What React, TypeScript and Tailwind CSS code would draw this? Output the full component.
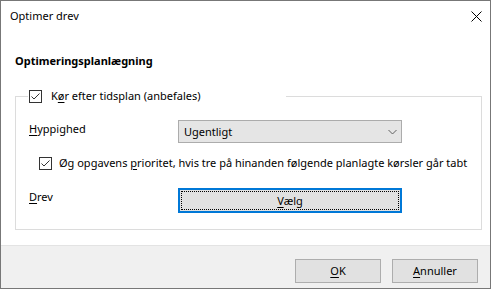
import React from "react";

const font = { fontFamily: '"Noto Sans", "Open Sans", sans-serif' };

function Check() {
  return (
    <div className="w-[13px] h-[13px] border border-[#333333] bg-white flex items-center justify-center shrink-0">
      <svg width="11" height="11" viewBox="0 0 11 11">
        <path d="M1.5 5.5 L4 8 L9.5 2.5" fill="none" stroke="#333333" strokeWidth="1" />
      </svg>
    </div>
  );
}

export default function App() {
  return (
    <div className="w-[492px] h-[289px] bg-white text-[11px] text-black leading-[16px] whitespace-nowrap" style={font}>
      <div className="w-[491px] h-[289px] border border-[#777777] bg-white flex flex-col">
        {/* Title bar */}
        <div className="h-[30px] flex items-center justify-between pl-[9px] pr-[8px] shrink-0">
          <span className="text-[11px]">Optimer drev</span>
          <svg width="11" height="11" viewBox="0 0 11 11">
            <path d="M0.5 0.5 L10.5 10.5 M10.5 0.5 L0.5 10.5" stroke="#000" strokeWidth="1" />
          </svg>
        </div>
        {/* Body */}
        <div className="flex-1 pl-[14px]">
          <div className="mt-[22px] h-[16px] font-bold text-[11px]">Optimeringsplanlægning</div>
          <div className="mt-[27px] w-[467px] h-[134px] border border-[#dcdcdc] flex flex-col">
            <div className="-mt-[9px] ml-[12px] w-[258px] h-[16px] bg-white flex items-center pl-[1px]">
              <Check />
              <span className="ml-[9px]">
                K<u className="underline-offset-2">ø</u>r efter tidsplan (anbefales)
              </span>
            </div>
            <div className="mt-[16px] flex items-start h-[23px]">
              <div className="pl-[13px] w-[162px] mt-[1px]">
                <u className="underline-offset-2">H</u>yppighed
              </div>
              <div className="w-[224px] h-[23px] bg-[#e5e5e5] border border-[#acacac] flex items-center justify-between pl-[5px] pr-[4px]">
                <span className="mt-[1px]">Ugentligt</span>
                <svg width="9" height="6" viewBox="0 0 9 6">
                  <path d="M0.5 1 L4.5 5 L8.5 1" fill="none" stroke="#606060" strokeWidth="1" />
                </svg>
              </div>
            </div>
            <div className="mt-[12px] h-[16px] flex items-center pl-[23px]">
              <Check />
              <span className="ml-[7px]">
                Øg opgavens <u className="underline-offset-2">p</u>rioritet, hvis tre på hinanden følgende planlagte kørsler går tabt
              </span>
            </div>
            <div className="mt-[17px] flex items-start h-[25px]">
              <div className="pl-[13px] w-[162px] mt-[1px]">
                <u className="underline-offset-2">D</u>rev
              </div>
              <div className="w-[224px] h-[25px] bg-[#e1e1e1] border-2 border-[#0078d7] p-[1px]">
                <div className="w-full h-full border border-dotted border-black flex items-center justify-center">
                  <span>
                    <u className="underline-offset-2">V</u>ælg
                  </span>
                </div>
              </div>
            </div>
          </div>
        </div>
        {/* Footer */}
        <div className="h-[43px] bg-[#f0f0f0] border-t border-[#e3e3e3] shrink-0 flex justify-end items-start pt-[13px] pr-[12px] gap-[11px]">
          <div className="w-[86px] h-[24px] bg-[#e1e1e1] border border-[#adadad] flex items-center justify-center">
            <span>
              <u className="underline-offset-2">O</u>K
            </span>
          </div>
          <div className="w-[86px] h-[24px] bg-[#e1e1e1] border border-[#adadad] flex items-center justify-center">
            <span>
              <u className="underline-offset-2">A</u>nnuller
            </span>
          </div>
        </div>
      </div>
    </div>
  );
}
